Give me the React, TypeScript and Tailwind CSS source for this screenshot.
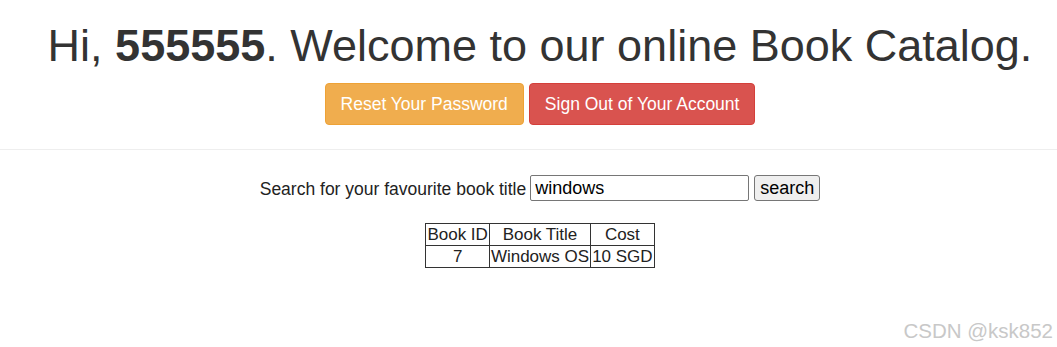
export default function App() {
  return (
    <div className="w-[1080px] bg-white text-[#333] font-['Liberation_Sans',Arial,sans-serif]">
      <div className="flex flex-col items-center pt-[19px]">
        <h1 className="text-[45px] leading-[54px] font-normal">
          Hi, <b>555555</b>. Welcome to our online Book Catalog.
        </h1>
        <div className="flex gap-[5px] mt-[10px]">
          <button className="h-[42px] px-[15px] bg-[#f0ad4e] border border-[#eea236] rounded-[4px] text-white text-[17.5px]">
            Reset Your Password
          </button>
          <button className="h-[42px] px-[15px] bg-[#d9534f] border border-[#d43f3a] rounded-[4px] text-white text-[17.5px]">
            Sign Out of Your Account
          </button>
        </div>
      </div>
      <hr className="mt-[24px] border-t border-[#eee]" />
      <div className="flex flex-col items-center mt-[24px]">
        <div className="flex items-center gap-[4px] text-[17.5px] text-[#222]">
          <span className="pt-[2px]">Search for your favourite book title</span>
          <input
            type="text"
            defaultValue="windows"
            className="w-[219px] h-[26px] px-[4px] border border-[#767676] rounded-[2px] text-[18px] text-black outline-none"
          />
          <button className="h-[26px] px-[5px] ml-[1px] bg-[#efefef] border border-[#767676] rounded-[3px] text-[18px] text-black leading-none">
            search
          </button>
        </div>
        <table className="mt-[21px] border-collapse text-[17px] text-[#222] leading-[21px]">
          <thead>
            <tr>
              <th className="border border-[#333] font-normal px-[1px]">Book ID</th>
              <th className="border border-[#333] font-normal px-[1px]">Book Title</th>
              <th className="border border-[#333] font-normal px-[1px]">Cost</th>
            </tr>
          </thead>
          <tbody>
            <tr>
              <td className="border border-[#333] text-center px-[1px]">7</td>
              <td className="border border-[#333] text-center px-[1px]">Windows OS</td>
              <td className="border border-[#333] text-center px-[1px]">10 SGD</td>
            </tr>
          </tbody>
        </table>
      </div>
      <div className="flex justify-end pr-[27px] mt-[48px] text-[20.5px] text-[#c8c8c8]">CSDN @ksk852</div>
    </div>
  );
}
